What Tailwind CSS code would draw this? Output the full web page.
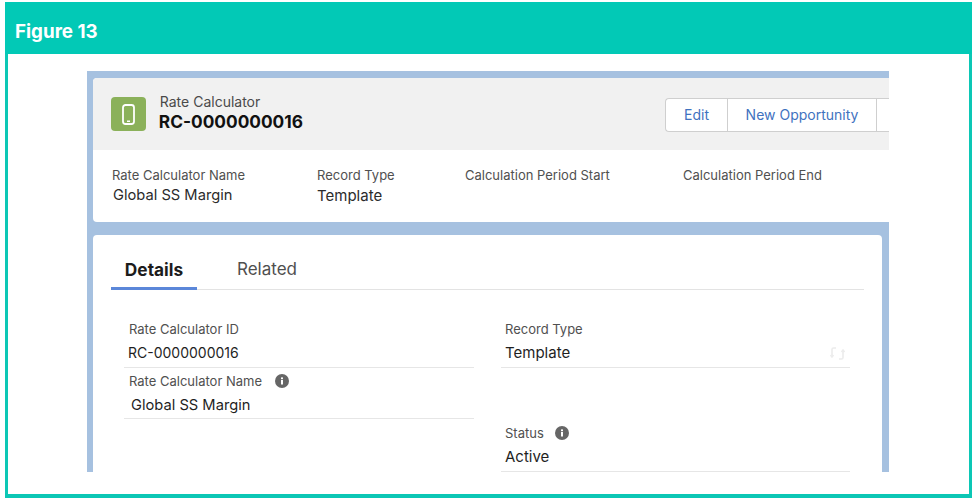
<!DOCTYPE html>
<html>
<head>
<title>Figure 13</title>
<meta name="viewport" content="width=device-width, initial-scale=1.0">
<script src="https://cdn.jsdelivr.net/npm/@tailwindcss/browser@4"></script>
</head>
<body class="bg-white font-['Inter',sans-serif] w-[976px] h-[502px] overflow-hidden">
<div class="ml-[5px] mt-[2px] w-[967px] h-[496px] bg-white border-x-[3px] border-b-4 border-[#0cc7b5] flex flex-col">
  <!-- title bar -->
  <div class="h-[52px] shrink-0 -mx-[3px] bg-[#02c9b6] pl-[10px] pt-[8px] flex items-center">
    <h1 class="text-white text-[18.8px] font-bold font-['Inter',sans-serif]">Figure 13</h1>
  </div>

  <!-- screenshot panel -->
  <div class="ml-[79px] mt-[17px] w-[802px] h-[401px] bg-[#a6c1e0] overflow-hidden pl-[6px] pt-[7px]">
    <!-- highlights -->
    <div class="w-[796px] h-[144px] bg-white rounded-tl-[4px] rounded-bl-[4px] overflow-hidden">
      <div class="h-[72px] bg-[#f1f1f1] pl-[18px] flex items-center">
        <div class="w-[35px] h-[34px] rounded-[4px] bg-[#8bb15a] flex items-center justify-center">
          <svg class="w-[15px] h-[21px]" viewBox="0 0 15 21" fill="none">
            <rect x="2" y="1" width="11" height="19" rx="2.500" stroke="#fff" stroke-width="1.800"/>
            <rect x="6" y="16.500" width="3" height="1.500" fill="#fff"/>
          </svg>
        </div>
        <div class="ml-[14px] w-[509px] -mt-[1px]">
          <div class="text-[14px] leading-[17px] text-[#4a4a4a]">Rate Calculator</div>
          <div class="text-[17.300px] leading-[24px] -ml-[1px] font-bold text-[#111]">RC-0000000016</div>
        </div>
        <div class="flex h-[34px] mt-[1px] text-[14px] text-[#3f72c0] bg-white border border-[#cfcfcf] border-r-0 rounded-l-[4px] -ml-[1px]">
          <div class="w-[62px] flex items-center justify-center border-r border-[#cfcfcf]">Edit</div>
          <div class="w-[149px] flex items-center justify-center border-r border-[#cfcfcf]">New Opportunity</div>
          <div class="w-[12px]"></div>
        </div>
      </div>
      <div class="flex pl-[19px] pt-[17px]">
        <div class="w-[205px]">
          <div class="text-[13px] leading-[17px] text-[#505050]">Rate Calculator Name</div>
          <div class="text-[14.700px] leading-[20px] mt-[1px] ml-[1px] text-[#2b2b2b]">Global SS Margin</div>
        </div>
        <div class="w-[148px]">
          <div class="text-[13px] leading-[17px] text-[#505050]">Record Type</div>
          <div class="text-[15px] leading-[20px] mt-[2px] text-[#2b2b2b]">Template</div>
        </div>
        <div class="w-[218px] text-[13px] leading-[17px] text-[#505050]">Calculation Period Start</div>
        <div class="text-[13px] leading-[17px] text-[#505050]">Calculation Period End</div>
      </div>
    </div>

    <!-- details -->
    <div class="mt-[13px] w-[789px] h-[300px] bg-white rounded-t-[4px] pt-[21px]">
      <div class="ml-[18px] w-[753px] h-[34px] border-b border-[#e3e3e3] flex">
        <div class="w-[86px] h-[34px] border-b-[3px] border-[#5b87d9] text-center text-[17.300px] font-bold text-[#1c1c1c] leading-[27px]">Details</div>
        <div class="ml-[40px] text-[17px] text-[#4f4f4f] leading-[27px]">Related</div>
      </div>
      <div class="flex mt-[31px] ml-[31px]">
        <div class="w-[350px]">
          <div class="h-[47px] border-b border-[#e6e6e6]">
            <div class="ml-[5px] text-[13px] leading-[16px] text-[#505050]">Rate Calculator ID</div>
            <div class="ml-[4px] mt-[6px] text-[14px] leading-[20px] text-[#1f1f1f]">RC-0000000016</div>
          </div>
          <div class="h-[51px] border-b border-[#e6e6e6] pt-[5px]">
            <div class="ml-[5px] text-[13px] leading-[16px] text-[#505050] flex items-center">Rate Calculator Name
              <svg class="ml-[13px] w-[14px] h-[14px]" viewBox="0 0 14 14"><circle cx="7" cy="7" r="7" fill="#666"/><rect x="6" y="6" width="2" height="4.500" fill="#fff"/><rect x="6" y="3.400" width="2" height="1.800" fill="#fff"/></svg>
            </div>
            <div class="ml-[7px] mt-[6px] text-[14.700px] leading-[20px] text-[#1f1f1f]">Global SS Margin</div>
          </div>
        </div>
        <div class="ml-[27px] w-[349px]">
          <div class="h-[47px] border-b border-[#e6e6e6] relative">
            <div class="ml-[4px] text-[13px] leading-[16px] text-[#505050]">Record Type</div>
            <div class="ml-[4px] mt-[6px] text-[15px] leading-[20px] text-[#1f1f1f]">Template</div>
            <svg class="absolute right-[5px] top-[25px] w-[15px] h-[15px]" viewBox="0 0 15 15" fill="none" stroke="#ececec" stroke-width="1.600"><path d="M6 2H3.500C2.500 2 2 2.600 2 3.500V11"/><path d="M9 13h2.500C12.500 13 13 12.400 13 11.500V4"/><path d="M0.500 9 2 11l1.500-2"/><path d="M11.500 6 13 4l1.500 2"/></svg>
          </div>
          <div class="h-[57px]"></div>
          <div class="h-[47px] border-b border-[#e6e6e6]">
            <div class="ml-[4px] text-[13px] leading-[16px] text-[#505050] flex items-center">Status
              <svg class="ml-[11px] w-[14px] h-[14px]" viewBox="0 0 14 14"><circle cx="7" cy="7" r="7" fill="#666"/><rect x="6" y="6" width="2" height="4.500" fill="#fff"/><rect x="6" y="3.400" width="2" height="1.800" fill="#fff"/></svg>
            </div>
            <div class="ml-[4px] mt-[6px] text-[15px] leading-[20px] text-[#1f1f1f]">Active</div>
          </div>
        </div>
      </div>
    </div>
  </div>
</div>
</body>
</html>
